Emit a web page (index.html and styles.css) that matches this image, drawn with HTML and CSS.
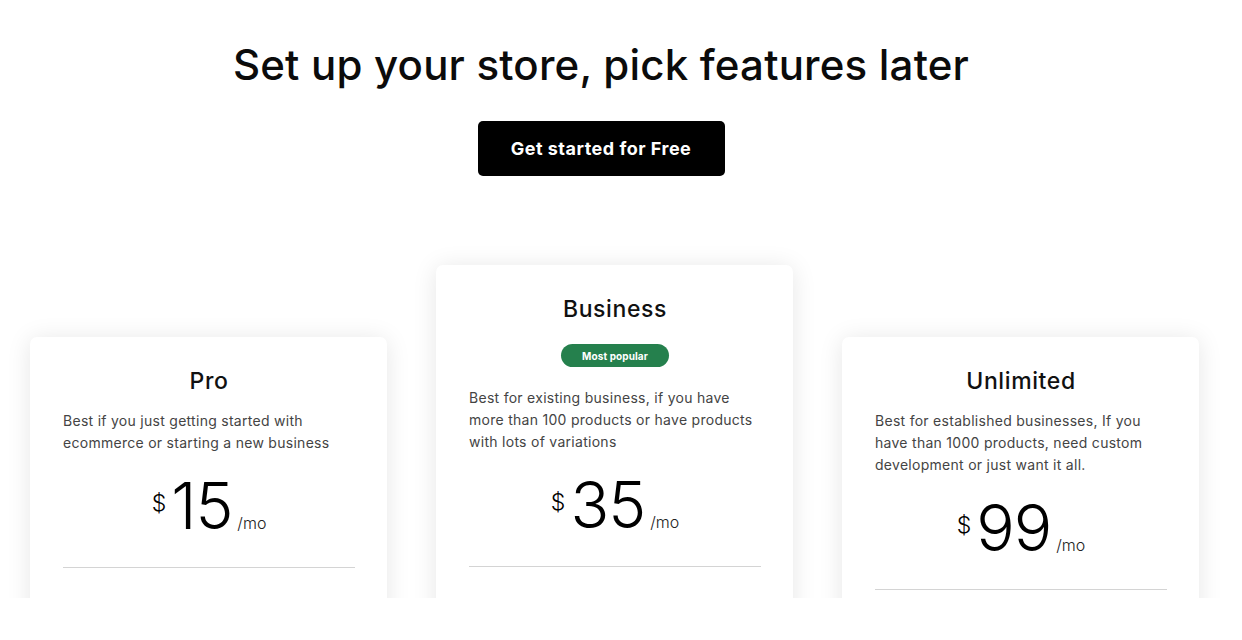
FILE: index.html
```html
<!DOCTYPE html>
<html lang="en">
<head>
<meta charset="utf-8">
<title>Pricing</title>
<link rel="stylesheet" href="styles.css">
</head>
<body>
<div class="viewport">
  <section class="hero">
    <h1 class="hero-title">Set up your store, pick features later</h1>
    <a class="cta" href="#">Get started for Free</a>
  </section>
  <section class="plans">
    <article class="card">
      <h3 class="card-title">Pro</h3>
      <p class="card-desc">Best if you just getting started with ecommerce or starting a new business</p>
      <div class="price"><span class="cur">$</span><span class="amt">15</span><span class="per">/mo</span></div>
      <hr class="divider">
    </article>
    <article class="card card-featured">
      <h3 class="card-title">Business</h3>
      <div class="badge-row"><span class="badge">Most popular</span></div>
      <p class="card-desc">Best for existing business, if you have more than 100 products or have products with lots of variations</p>
      <div class="price"><span class="cur">$</span><span class="amt">35</span><span class="per">/mo</span></div>
      <hr class="divider">
    </article>
    <article class="card">
      <h3 class="card-title">Unlimited</h3>
      <p class="card-desc">Best for established businesses, If you have than 1000 products, need custom development or just want it all.</p>
      <div class="price"><span class="cur">$</span><span class="amt">99</span><span class="per">/mo</span></div>
      <hr class="divider">
    </article>
  </section>
</div>
</body>
</html>
```

FILE: styles.css
```css
* { box-sizing: border-box; }
html, body { margin: 0; padding: 0; background: #fff; }
body {
  font-family: Inter, "Noto Sans", "Liberation Sans", sans-serif;
  color: #111;
}
.viewport {
  height: 598px;
  overflow: hidden;
}
.hero {
  width: 1202px;
  display: flex;
  flex-direction: column;
  align-items: center;
  padding-top: 39px;
}
.hero-title {
  margin: 0;
  font-size: 42px;
  line-height: 52px;
  font-weight: 500;
  color: #0b0b0b;
  letter-spacing: 0.2px;
}
.cta {
  margin-top: 30px;
  width: 247px;
  height: 55px;
  display: flex;
  align-items: center;
  justify-content: center;
  background: #000;
  color: #fff;
  border-radius: 5px;
  font-size: 18px;
  font-weight: 700;
  letter-spacing: 0.5px;
  text-decoration: none;
}
.plans {
  display: flex;
  align-items: flex-start;
  gap: 49px;
  padding-left: 30px;
  margin-top: 89px;
}
.card {
  width: 357px;
  height: 520px;
  background: #fff;
  border-radius: 7px;
  box-shadow: 0 2px 24px rgba(0, 0, 0, 0.10);
  padding: 30px 32px 0 33px;
  margin-top: 72px;
}
.card-featured {
  margin-top: 0;
}
.card-title {
  margin: 0;
  text-align: center;
  font-size: 23px;
  line-height: 28px;
  font-weight: 500;
  letter-spacing: 0.6px;
  color: #111;
}
.badge-row {
  display: flex;
  justify-content: center;
  margin-top: 21px;
}
.badge {
  width: 108px;
  height: 23px;
  border-radius: 12px;
  background: #25804d;
  color: #fff;
  font-size: 10px;
  font-weight: 700;
  letter-spacing: 0.1px;
  display: flex;
  align-items: center;
  justify-content: center;
}
.card-desc {
  margin: 15px 0 0;
  font-size: 14px;
  line-height: 22px;
  letter-spacing: 0.28px;
  color: #444;
}
.card-featured .card-desc {
  margin-top: 20px;
}
.price {
  margin-top: 16px;
  display: flex;
  justify-content: center;
  align-items: baseline;
  color: #000;
}
.cur {
  font-size: 23px;
  font-weight: 300;
  align-self: flex-start;
  margin-top: 19px;
  margin-right: 5px;
}
.amt {
  font-size: 64px;
  line-height: 72px;
  font-weight: 300;
  letter-spacing: -1px;
}
.per {
  font-size: 16px;
  font-weight: 300;
  color: #222;
  margin-left: 5px;
}
.divider {
  margin: 25px 0 0;
  border: 0;
  border-top: 1px solid #d4d4d4;
}
```
